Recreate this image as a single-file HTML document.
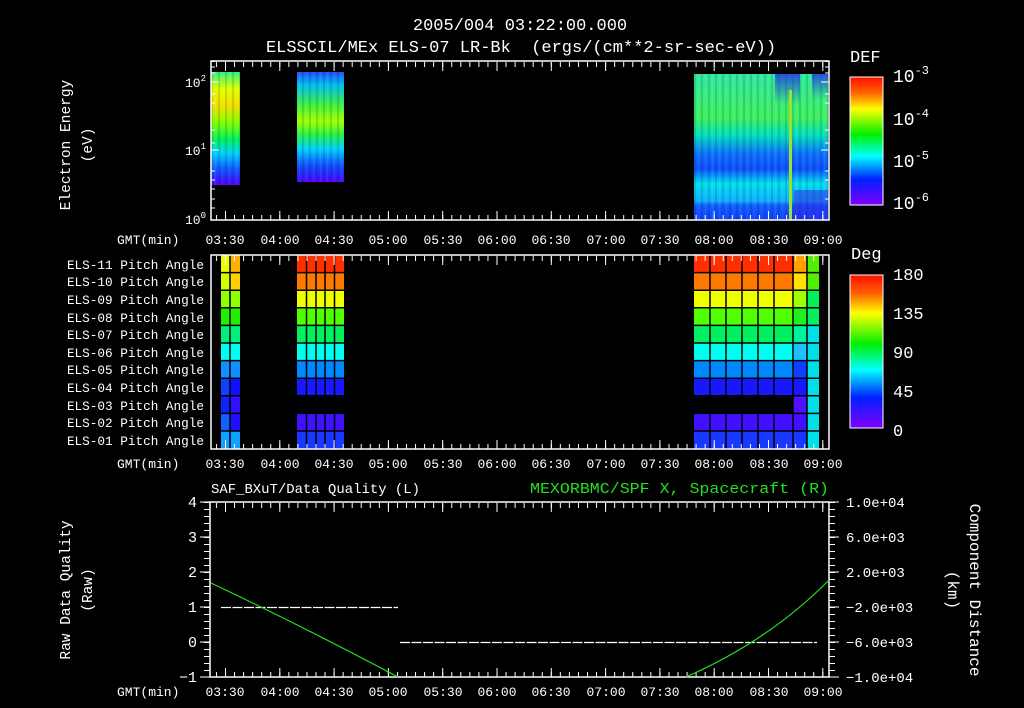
<!DOCTYPE html>
<html><head><meta charset="utf-8"><style>
html,body{margin:0;padding:0;background:#000;}
svg{display:block;font-size:13px;}
text{font-family:"Liberation Mono",monospace;fill:#fff;}
</style></head><body>
<svg width="1024" height="708" viewBox="0 0 1024 708" xmlns="http://www.w3.org/2000/svg">
<defs>
<linearGradient id="cb" x1="0" y1="0" x2="0" y2="1">
<stop offset="0" stop-color="#ff1000"/><stop offset="0.12" stop-color="#ff6000"/><stop offset="0.25" stop-color="#ffff00"/><stop offset="0.45" stop-color="#00f000"/><stop offset="0.62" stop-color="#00ffff"/><stop offset="0.8" stop-color="#0020ff"/><stop offset="1" stop-color="#8000ff"/>
</linearGradient>
<linearGradient id="b1" x1="0" y1="0" x2="0" y2="1">
<stop offset="0" stop-color="#30f080"/><stop offset="0.15" stop-color="#e0ff00"/><stop offset="0.3" stop-color="#f0e000"/><stop offset="0.45" stop-color="#80ff00"/><stop offset="0.6" stop-color="#00f060"/><stop offset="0.72" stop-color="#00d0ff"/><stop offset="0.85" stop-color="#1060ff"/><stop offset="0.95" stop-color="#3020ff"/><stop offset="1" stop-color="#6000ff"/>
</linearGradient>
<linearGradient id="b2" x1="0" y1="0" x2="0" y2="1">
<stop offset="0" stop-color="#2050ff"/><stop offset="0.12" stop-color="#00c0f0"/><stop offset="0.3" stop-color="#40f040"/><stop offset="0.45" stop-color="#a0ff00"/><stop offset="0.58" stop-color="#20f050"/><stop offset="0.7" stop-color="#00d0ff"/><stop offset="0.85" stop-color="#1050ff"/><stop offset="0.95" stop-color="#3020ff"/><stop offset="1" stop-color="#6000ff"/>
</linearGradient>
<linearGradient id="b3" x1="0" y1="0" x2="0" y2="1">
<stop offset="0" stop-color="#30e8a0"/><stop offset="0.3" stop-color="#40f060"/><stop offset="0.42" stop-color="#00e0c0"/><stop offset="0.55" stop-color="#1070ff"/><stop offset="0.65" stop-color="#1050ff"/><stop offset="0.75" stop-color="#00e0f0"/><stop offset="0.87" stop-color="#10b0ff"/><stop offset="0.9" stop-color="#1060ff"/><stop offset="1" stop-color="#1040ff"/>
</linearGradient>
<linearGradient id="fadeB" x1="0" y1="0" x2="0" y2="1">
<stop offset="0" stop-color="#2030e0" stop-opacity="0.8"/><stop offset="1" stop-color="#2030e0" stop-opacity="0"/>
</linearGradient>
<pattern id="tx" patternUnits="userSpaceOnUse" x="215.95" y="0" width="9.05" height="708"><rect x="0" y="0" width="1" height="708" fill="#fff"/></pattern>
<pattern id="txM" patternUnits="userSpaceOnUse" x="225" y="0" width="54.3" height="708"><rect x="0" y="0" width="1" height="708" fill="#fff"/></pattern>
<pattern id="ty3" patternUnits="userSpaceOnUse" x="0" y="502" width="1024" height="7"><rect x="0" y="0" width="1024" height="1" fill="#fff"/></pattern>
<pattern id="stripes" patternUnits="userSpaceOnUse" x="694" y="0" width="7" height="708"><rect x="0" y="0" width="2" height="708" fill="#000" opacity="0.12"/><rect x="4" y="0" width="1" height="708" fill="#fff" opacity="0.08"/></pattern>
</defs>

<text x="520" y="30" text-anchor="middle" style="font-size:17px">2005/004 03:22:00.000</text>
<text x="521" y="52" text-anchor="middle" style="font-size:17px" xml:space="preserve">ELSSCIL/MEx ELS-07 LR-Bk  (ergs/(cm**2-sr-sec-eV))</text>

<!-- Panel 1 -->
<rect x="211" y="72" width="29" height="113" fill="url(#b1)"/>
<rect x="297" y="72" width="47" height="110" fill="url(#b2)"/>
<rect x="211" y="72" width="29" height="113" fill="url(#stripes)"/>
<rect x="297" y="72" width="47" height="110" fill="url(#stripes)"/>
<rect x="694" y="74" width="134" height="146" fill="url(#b3)"/>
<rect x="694" y="74" width="134" height="146" fill="url(#stripes)"/>
<rect x="775" y="74" width="25" height="30" fill="url(#fadeB)"/>
<rect x="812" y="74" width="16" height="25" fill="url(#fadeB)"/>
<rect x="789" y="90" width="3" height="130" fill="#a0e030"/>
<rect x="794" y="190" width="34" height="30" fill="#3020e0" opacity="0.5"/>
<rect x="211" y="61" width="618" height="159" fill="none" stroke="#fff" stroke-width="1.5"/>
<rect x="211" y="62" width="618" height="5" fill="url(#tx)"/>
<rect x="211" y="62" width="618" height="9" fill="url(#txM)"/>
<rect x="211" y="215" width="618" height="5" fill="url(#tx)"/>
<rect x="211" y="211" width="618" height="9" fill="url(#txM)"/>
<g stroke="#fff" stroke-width="1">
<path d="M211 82h8M211 150h8M211 220h8M211 61.5h4M211 67h4M211 73h4M211 94h4M211 103h4M211 130h4M211 143h4M211 171h4M211 180h4M211 189h4M211 199h4M211 208h4M829 82h-8M829 150h-8M829 61.5h-4M829 67h-4M829 73h-4M829 94h-4M829 103h-4M829 130h-4M829 143h-4M829 171h-4M829 180h-4M829 199h-4"/>
</g>
<text x="206" y="87" text-anchor="end" style="font-size:13px">10<tspan style="font-size:9px" dy="-6">2</tspan></text>
<text x="206" y="155" text-anchor="end" style="font-size:13px">10<tspan style="font-size:9px" dy="-6">1</tspan></text>
<text x="206" y="224" text-anchor="end" style="font-size:13px">10<tspan style="font-size:9px" dy="-6">0</tspan></text>
<text transform="translate(70,145) rotate(-90)" text-anchor="middle" style="font-size:14.5px">Electron Energy</text>
<text transform="translate(92,145) rotate(-90)" text-anchor="middle" style="font-size:14.5px">(eV)</text>

<!-- colorbar 1 -->
<text x="850" y="62" style="font-size:17px">DEF</text>
<rect x="850" y="77" width="33" height="128" fill="url(#cb)" stroke="#fff" stroke-width="1"/>
<text x="893" y="82" style="font-size:18px">10<tspan style="font-size:12px" dy="-8">-3</tspan></text>
<text x="893" y="125" style="font-size:18px">10<tspan style="font-size:12px" dy="-8">-4</tspan></text>
<text x="893" y="167" style="font-size:18px">10<tspan style="font-size:12px" dy="-8">-5</tspan></text>
<text x="893" y="209" style="font-size:18px">10<tspan style="font-size:12px" dy="-8">-6</tspan></text>

<text x="117" y="244">GMT(min)</text>
<g text-anchor="middle">
<text x="225" y="244">03:30</text><text x="280" y="244">04:00</text><text x="334" y="244">04:30</text><text x="388" y="244">05:00</text><text x="443" y="244">05:30</text><text x="497" y="244">06:00</text><text x="551" y="244">06:30</text><text x="606" y="244">07:00</text><text x="660" y="244">07:30</text><text x="714" y="244">08:00</text><text x="769" y="244">08:30</text><text x="823" y="244">09:00</text>
</g>

<!-- Panel 2 -->
<g>
<rect x="221" y="255" width="19" height="194" fill="#20a0ff"/>
<rect x="221" y="255" width="19" height="17.6" fill="#e8ff00"/><rect x="230" y="255" width="10" height="17.6" fill="#ffb000"/>
<rect x="221" y="272.6" width="19" height="17.6" fill="#d0ff00"/><rect x="230" y="272.6" width="10" height="17.6" fill="#ffd000"/>
<rect x="221" y="290.2" width="19" height="17.6" fill="#90ff00"/>
<rect x="221" y="307.8" width="19" height="17.6" fill="#20f000"/>
<rect x="221" y="325.4" width="19" height="17.6" fill="#00f080"/>
<rect x="221" y="343" width="19" height="17.6" fill="#00fff0"/>
<rect x="221" y="360.6" width="19" height="17.6" fill="#1090ff"/>
<rect x="221" y="378.2" width="19" height="17.6" fill="#1040ff"/><rect x="230" y="378.2" width="10" height="17.6" fill="#1010ff"/>
<rect x="221" y="395.8" width="19" height="17.6" fill="#1020ff"/><rect x="230" y="395.8" width="10" height="17.6" fill="#3010ff"/>
<rect x="221" y="413.4" width="19" height="17.6" fill="#1060ff"/><rect x="230" y="413.4" width="10" height="17.6" fill="#2010ff"/>
<rect x="221" y="431" width="19" height="18" fill="#10a0ff"/>
</g>
<g>
<rect x="297" y="255" width="47" height="17.6" fill="#ff3000"/>
<rect x="297" y="272.6" width="47" height="17.6" fill="#ff7800"/>
<rect x="297" y="290.2" width="47" height="17.6" fill="#f0ff00"/>
<rect x="297" y="307.8" width="47" height="17.6" fill="#50ff00"/>
<rect x="297" y="325.4" width="47" height="17.6" fill="#00f060"/>
<rect x="297" y="343" width="47" height="17.6" fill="#00ffee"/>
<rect x="297" y="360.6" width="47" height="17.6" fill="#0088ff"/>
<rect x="297" y="378.2" width="47" height="17.6" fill="#1818ff"/>
<rect x="297" y="413.4" width="47" height="17.6" fill="#4010ff"/>
<rect x="297" y="431" width="47" height="18" fill="#1838ff"/>
</g>
<g>
<rect x="694" y="255" width="113" height="17.6" fill="#ff3000"/>
<rect x="694" y="272.6" width="113" height="17.6" fill="#ff7800"/>
<rect x="694" y="290.2" width="113" height="17.6" fill="#f0ff00"/>
<rect x="694" y="307.8" width="113" height="17.6" fill="#50ff00"/>
<rect x="694" y="325.4" width="113" height="17.6" fill="#00f060"/>
<rect x="694" y="343" width="113" height="17.6" fill="#00ffee"/>
<rect x="694" y="360.6" width="113" height="17.6" fill="#0088ff"/>
<rect x="694" y="378.2" width="113" height="17.6" fill="#1818ff"/>
<rect x="694" y="413.4" width="113" height="17.6" fill="#4010ff"/>
<rect x="694" y="431" width="113" height="18" fill="#1838ff"/>
<rect x="793" y="395.8" width="14" height="17.6" fill="#5010ff"/>
<rect x="794" y="255" width="13" height="17.6" fill="#ffa000"/>
<rect x="794" y="272.6" width="13" height="17.6" fill="#ffe000"/>
<rect x="794" y="290.2" width="13" height="17.6" fill="#a0ff00"/>
<rect x="794" y="307.8" width="13" height="17.6" fill="#20f020"/>
<rect x="794" y="325.4" width="13" height="17.6" fill="#00f0a0"/>
<rect x="794" y="343" width="13" height="17.6" fill="#20c0ff"/>
<rect x="794" y="360.6" width="13" height="17.6" fill="#1040ff"/>
<rect x="807" y="255" width="12" height="194" fill="#00e0e8"/>
<rect x="807" y="255" width="12" height="35" fill="#50f000"/>
<rect x="807" y="290" width="12" height="35" fill="#00f060"/>
</g>
<g stroke="#000" stroke-width="1.5">
<path d="M211 272.6H829M211 290.2H829M211 307.8H829M211 325.4H829M211 343H829M211 360.6H829M211 378.2H829M211 395.8H829M211 413.4H829M211 431H829"/>
<path d="M230 255V449M306.5 255V449M316 255V449M325 255V449M334.5 255V449M710 255V449M726 255V449M742 255V449M758 255V449M774 255V449M793 255V449M807 255V449"/>
</g>
<rect x="211" y="255" width="618" height="194" fill="none" stroke="#fff" stroke-width="1.5"/>
<rect x="211" y="256" width="618" height="5" fill="url(#tx)"/>
<rect x="211" y="256" width="618" height="9" fill="url(#txM)"/>
<rect x="211" y="444" width="618" height="5" fill="url(#tx)"/>
<rect x="211" y="440" width="618" height="9" fill="url(#txM)"/>
<g text-anchor="end" style="font-size:12.7px">
<text x="204" y="269">ELS-11 Pitch Angle</text>
<text x="204" y="286">ELS-10 Pitch Angle</text>
<text x="204" y="304">ELS-09 Pitch Angle</text>
<text x="204" y="322">ELS-08 Pitch Angle</text>
<text x="204" y="339">ELS-07 Pitch Angle</text>
<text x="204" y="357">ELS-06 Pitch Angle</text>
<text x="204" y="374">ELS-05 Pitch Angle</text>
<text x="204" y="392">ELS-04 Pitch Angle</text>
<text x="204" y="410">ELS-03 Pitch Angle</text>
<text x="204" y="427">ELS-02 Pitch Angle</text>
<text x="204" y="445">ELS-01 Pitch Angle</text>
</g>
<text x="851" y="259" style="font-size:17px">Deg</text>
<rect x="850" y="275" width="33" height="153" fill="url(#cb)" stroke="#fff" stroke-width="1"/>
<g style="font-size:17px"><text x="893" y="280">180</text><text x="893" y="319">135</text><text x="893" y="358">90</text><text x="893" y="397">45</text><text x="893" y="436">0</text></g>

<text x="117" y="468">GMT(min)</text>
<g text-anchor="middle">
<text x="225" y="468">03:30</text><text x="280" y="468">04:00</text><text x="334" y="468">04:30</text><text x="388" y="468">05:00</text><text x="443" y="468">05:30</text><text x="497" y="468">06:00</text><text x="551" y="468">06:30</text><text x="606" y="468">07:00</text><text x="660" y="468">07:30</text><text x="714" y="468">08:00</text><text x="769" y="468">08:30</text><text x="823" y="468">09:00</text>
</g>

<!-- Panel 3 -->
<text x="211" y="493" style="font-size:14px" textLength="209" lengthAdjust="spacingAndGlyphs">SAF_BXuT/Data Quality (L)</text>
<text x="829" y="493" text-anchor="end" style="font-size:15px;fill:#20e020" textLength="299" lengthAdjust="spacingAndGlyphs">MEXORBMC/SPF X, Spacecraft (R)</text>
<rect x="210" y="502" width="619" height="175" fill="none" stroke="#fff" stroke-width="1.5"/>
<rect x="211" y="503" width="618" height="5" fill="url(#tx)"/>
<rect x="211" y="503" width="618" height="9" fill="url(#txM)"/>
<rect x="211" y="672" width="618" height="5" fill="url(#tx)"/>
<rect x="211" y="668" width="618" height="9" fill="url(#txM)"/>
<rect x="204" y="502" width="6" height="175" fill="url(#ty3)"/>
<rect x="829" y="502" width="6" height="175" fill="url(#ty3)"/>
<g stroke="#fff" stroke-width="1"><path d="M200 502h10M200 537h10M200 572h10M200 607h10M200 642h10M200 677h10M829 502h10M829 537h10M829 572h10M829 607h10M829 642h10M829 677h10"/></g>
<g text-anchor="end" style="font-size:15px"><text x="197" y="507">4</text><text x="197" y="542">3</text><text x="197" y="577">2</text><text x="197" y="612">1</text><text x="197" y="647">0</text><text x="197" y="682">−1</text></g>
<g style="font-size:14px"><text x="846" y="507">1.0e+04</text><text x="846" y="542">6.0e+03</text><text x="846" y="577">2.0e+03</text><text x="846" y="612">−2.0e+03</text><text x="846" y="647">−6.0e+03</text><text x="846" y="682">−1.0e+04</text></g>
<path d="M221 607.5H398" stroke="#fff" stroke-width="1.2" stroke-dasharray="10,1.5"/>
<path d="M400 642.5H817" stroke="#fff" stroke-width="1.2" stroke-dasharray="10,1.5"/>
<path d="M211 583 Q300 625 398 677" fill="none" stroke="#20e020" stroke-width="1.2"/>
<path d="M686 677 Q770 640 829 580" fill="none" stroke="#20e020" stroke-width="1.2"/>
<text transform="translate(70,590) rotate(-90)" text-anchor="middle" style="font-size:14.5px">Raw Data Quality</text>
<text transform="translate(92,590) rotate(-90)" text-anchor="middle" style="font-size:14.5px">(Raw)</text>
<text transform="translate(970,590) rotate(90)" text-anchor="middle" style="font-size:16px">Component Distance</text>
<text transform="translate(948,590) rotate(90)" text-anchor="middle" style="font-size:16px">(km)</text>

<text x="117" y="696">GMT(min)</text>
<g text-anchor="middle">
<text x="225" y="696">03:30</text><text x="280" y="696">04:00</text><text x="334" y="696">04:30</text><text x="388" y="696">05:00</text><text x="443" y="696">05:30</text><text x="497" y="696">06:00</text><text x="551" y="696">06:30</text><text x="606" y="696">07:00</text><text x="660" y="696">07:30</text><text x="714" y="696">08:00</text><text x="769" y="696">08:30</text><text x="823" y="696">09:00</text>
</g>
</svg>
</body></html>
